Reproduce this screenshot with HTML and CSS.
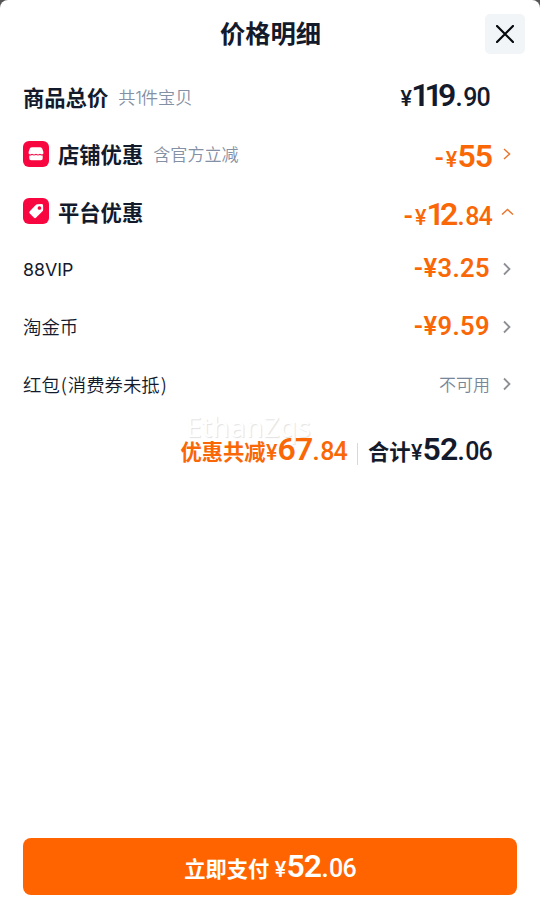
FILE: index.html
```html
<!DOCTYPE html>
<html lang="zh-CN">
<head>
<meta charset="utf-8">
<title>价格明细</title>
<link rel="stylesheet" href="styles.css">
</head>
<body>
<main class="sheet">
  <header class="header">
    <h1 class="title">价格明细</h1>
    <button class="close" aria-label="关闭"><svg width="18" height="18" viewBox="0 0 18 18"><path d="M1 1 17 17M17 1 1 17"/></svg></button>
  </header>
  <section class="rows">
    <div class="row">
      <span class="name">商品总价</span><span class="hint">共<span class="one">1</span>件宝贝</span>
      <span class="price total"><span class="yen">¥</span><span class="big ones">11</span><span class="big">9</span><span class="dot">.</span><span class="small">90</span></span>
    </div>
    <div class="row">
      <svg class="icon" viewBox="0 0 26 26"><rect width="26" height="26" rx="6"/><path class="fill" d="M9 6.300h8q1.400 0 2.200 1.200l1.200 3.500q.5 2.400-1.300 2.400-1.300 0-2.100-.7-.9.800-2 .8-1.100 0-2-.8-.9.800-2 .8-1.100 0-2-.8-.8.700-2.100.7-1.800 0-1.300-2.400l1.200-3.500q.8-1.200 2.200-1.200z"/><path class="fill" d="M6.300 14.600q1.700 0 2.700-.5 2 .8 4 0 2 .8 4 0 1 .5 2.700.5v3q0 1.700-1.700 1.700H8q-1.700 0-1.700-1.700z"/></svg>
      <span class="name">店铺优惠</span><span class="hint">含官方立减</span>
      <span class="price orange low whole"><span class="minus">-</span><span class="yen">¥</span><span class="big">55</span></span>
      <svg class="arrow hot" viewBox="0 0 12 14"><path d="m3 2 5.500 5-5.500 5"/></svg>
    </div>
    <div class="row">
      <svg class="icon" viewBox="0 0 26 26"><rect width="26" height="26" rx="6"/><path class="fill" fill-rule="evenodd" d="m6.800 13.200 5.900-6.100q.7-.8 1.700-.9l4.200-.2q1.400 0 1.500 1.400l.1 4.200q0 1-.7 1.700l-6.300 6.300q-1.200 1.100-2.400 0l-4-4q-1.100-1.200 0-2.400zM16.400 8.200a1.800 1.800 0 1 0 .1 0z"/></svg>
      <span class="name">平台优惠</span>
      <span class="price orange low"><span class="minus">-</span><span class="yen">¥</span><span class="big ones">1</span><span class="big">2</span><span class="dot">.</span><span class="small">84</span></span>
      <svg class="arrow hot up" viewBox="0 0 14 12"><path d="m2 8.500 5.500-5 5.500 5"/></svg>
    </div>
    <div class="row">
      <span class="label vip">88VIP</span>
      <span class="price orange even">-¥3.25</span>
      <svg class="arrow" viewBox="0 0 12 14"><path d="m3 1.500 5.500 5.500-5.500 5.500"/></svg>
    </div>
    <div class="row">
      <span class="label">淘金币</span>
      <span class="price orange even">-¥9.59</span>
      <svg class="arrow" viewBox="0 0 12 14"><path d="m3 1.500 5.500 5.500-5.500 5.500"/></svg>
    </div>
    <div class="row">
      <span class="label">红包<span class="paren">(</span>消费券未抵<span class="paren">)</span></span>
      <span class="none">不可用</span>
      <svg class="arrow" viewBox="0 0 12 14"><path d="m3 1.500 5.500 5.500-5.500 5.500"/></svg>
    </div>
  </section>
  <section class="summary">
    <span class="watermark">EthanZqs</span>
    <span class="sum orange"><span class="words">优惠共减</span><span class="yen">¥</span><span class="big">67</span><span class="dot">.</span><span class="small">84</span></span>
    <i class="divider"></i>
    <span class="sum"><span class="words">合计</span><span class="yen">¥</span><span class="big">52</span><span class="dot">.</span><span class="small">06</span></span>
  </section>
  <button class="pay"><span class="sum"><span class="words">立即支付</span><span class="yen">¥</span><span class="big">52</span><span class="dot">.</span><span class="small">06</span></span></button>
</main>
</body>
</html>
```
FILE: styles.css
```css
* { box-sizing: border-box; }
body { margin: 0; background: #555; font-family: "Noto Sans CJK SC", sans-serif; color: #131a2c; }
.sheet { height: 918px; background: #fff; border-radius: 8px 8px 0 0; display: flex; flex-direction: column; padding: 0 23px 23px; }
.header { height: 68px; display: grid; grid-template-columns: 1fr auto 1fr; align-items: center; margin-right: -8px; flex: none; }
.title { grid-column: 2; margin: -4px 7px 0 0; font-size: 25.3px; line-height: 40px; font-weight: 700; }
.close { justify-self: end; width: 40px; height: 40px; border: 0; border-radius: 5px; background: #f1f5f8; display: grid; place-items: center; padding: 0; }
.close svg { fill: none; stroke: #05080d; stroke-width: 2.2; stroke-linecap: round; }
.row { height: 57.5px; display: flex; align-items: center; white-space: nowrap; }
.icon { width: 26px; height: 26px; margin: -1px 9px 0 0; fill: #f8063f; }
.icon .fill { fill: #fff; }
.name { font-size: 21.3px; font-weight: 700; line-height: 30px; }
.hint { font-size: 17.1px; font-weight: 350; color: #8490a4; margin: -1px 0 0 10px; }
.one { font-family: Inter, sans-serif; font-size: 17px; letter-spacing: -1px; }
.label { font-size: 18.4px; font-weight: 350; margin-top: -1px; }
.paren { display: inline-block; width: 8px; text-align: center; }
.vip { font-family: Inter, sans-serif; font-size: 17.8px; font-weight: 400; margin-top: 1px; }
.price, .sum { font-family: Roboto, sans-serif; font-weight: 600; line-height: 32px; display: flex; align-items: baseline; font-stretch: 90%; }
.price { margin-left: auto; }
.total { margin-right: 27px; }
.low { position: relative; top: 4px; }
.whole { left: 2px; }
.orange { color: #f96706; }
.big { font-size: 32px; letter-spacing: -1px; }
.ones { letter-spacing: -5px; }
.small { font-size: 25px; font-weight: 500; letter-spacing: -.8px; }
.dot { font-size: 25px; width: 8px; text-align: center; }
.yen { font-size: 21.5px; font-weight: 500; width: 12px; text-align: center; }
.total .yen { margin-right: -1px; }
.minus { font-size: 26px; width: 11px; }
.even { font-size: 25.5px; margin-top: -2px; letter-spacing: .4px; }
.none { margin: -2px 0 0 auto; font-size: 17px; font-weight: 350; color: #78869a; }
.arrow { width: 12px; height: 14px; margin: 0 4px 0 11px; fill: none; stroke: #8d8f94; stroke-width: 1.8; }
.hot { stroke: #e8762f; stroke-width: 1.5; }
.up { width: 14px; height: 12px; margin: 0 3px 0 8px; }
.summary { position: relative; height: 76px; display: flex; align-items: center; justify-content: flex-end; margin-right: 25px; }
.words { font-family: "Noto Sans CJK SC", sans-serif; font-size: 21.3px; font-weight: 700; }
.divider { width: 1px; height: 22px; background: #d5d8df; margin: 5px 10px 0; }
.watermark { position: absolute; left: 163px; top: -3px; font: 28px/32px "Noto Sans", sans-serif; letter-spacing: .3px; color: #fff; text-shadow: 1px 1px 1px #e2e2e2; }
.summary .sum { position: relative; }
.pay { margin-top: auto; height: 57px; border: 0; border-radius: 8px; background: #ff6400; color: #fff; display: flex; align-items: center; justify-content: center; padding: 3px 0 0; }
.pay .words { margin-right: 5px; }
```
